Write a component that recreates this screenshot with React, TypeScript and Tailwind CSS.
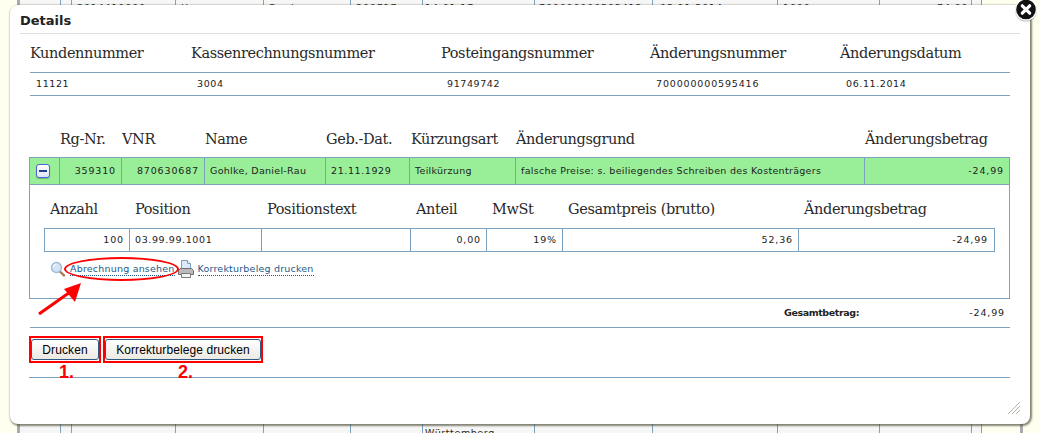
import React from 'react';

const bgLines = [60, 71, 175, 263, 350, 422, 534, 652, 777, 879, 971, 981];
const heading = "font-['DejaVu_Serif',serif] text-[14.5px] leading-[18px] font-light text-[#2a2a2a] tracking-[-0.39px]";
const base = "font-['DejaVu_Sans',sans-serif] text-[9.5px] leading-[12px] text-[#222]";
const small = `${base} tracking-[0.3px]`;
const nummer = `${base} tracking-[0.85px]`;
const datum = `${base} tracking-[0.6px]`;
const line = 'border-[#7ba2c1]';

// Zeile der Tabelle hinter dem Dialog, nur die Oberkante schaut heraus
const bgRow: [number, string][] = [
  [77, '3014410000'],
  [181, 'Hansen'],
  [268, 'Gerda'],
  [356, '390717'],
  [425, '14.01.17'],
  [539, '700000000595412'],
  [660, '05.11.2014'],
  [783, '1000'],
  [937, '74,99'],
];

const kopf = [
  ['Kundennummer', '11121', datum],
  ['Kassenrechnungsnummer', '3004', datum],
  ['Posteingangsnummer', '91749742', datum],
  ['Änderungsnummer', '700000000595416', nummer],
  ['Änderungsdatum', '06.11.2014', datum],
];

const rowCells = [
  { t: '359310', right: true, c: nummer },
  { t: '870630687', right: true, c: nummer },
  { t: 'Gohlke, Daniel-Rau', c: small },
  { t: '21.11.1929', c: datum },
  { t: 'Teilkürzung', c: small },
  { t: 'falsche Preise: s. beiliegendes Schreiben des Kostenträgers', c: small },
  { t: '-24,99', right: true, c: nummer },
];

const posCells = [
  { t: '100', right: true, c: nummer },
  { t: '03.99.99.1001', c: datum },
  { t: '', c: small },
  { t: '0,00', right: true, c: nummer },
  { t: '19%', right: true, c: nummer },
  { t: '52,36', right: true, c: nummer },
  { t: '-24,99', right: true, c: nummer },
];

function Magnifier() {
  return (
    <svg width="16" height="16" viewBox="0 0 16 16" className="shrink-0">
      <path d="M10 10.5l4 4" stroke="#a9784f" strokeWidth="2.4" strokeLinecap="round" />
      <circle cx="6.5" cy="6.5" r="5" fill="#d5e4f6" stroke="#9db8d8" strokeWidth="1.3" />
      <path d="M3.5 6a3 3 0 0 1 3-3" stroke="#fff" strokeWidth="1.2" fill="none" />
    </svg>
  );
}

function Printer() {
  return (
    <svg width="16" height="18" viewBox="0 0 16 18" className="shrink-0">
      <path d="M3.5 .5h6l3 3v6h-9z" fill="#dce9f8" stroke="#7d9cc4" />
      <path d="M9.5 .5v3h3" fill="#fff" stroke="#7d9cc4" />
      <path d="M.5 10.5l2-2h11l2 2v4h-15z" fill="#b9b9b9" stroke="#6e6e6e" />
      <path d="M3.5 13.5h9v4h-9z" fill="#f4f4f4" stroke="#7a7a7a" />
    </svg>
  );
}

function CloseIcon() {
  return (
    <svg width="24" height="24" viewBox="0 0 24 24">
      <circle cx="12" cy="12.6" r="11" fill="#777" opacity="0.45" />
      <circle cx="12" cy="11.5" r="10.4" fill="#111" stroke="#fff" strokeWidth="1.2" />
      <path d="M8.3 7.8l7.4 7.4M15.7 7.8l-7.4 7.4" stroke="#fff" strokeWidth="3.2" strokeLinecap="round" />
    </svg>
  );
}

function Resize() {
  return (
    <svg width="12" height="12" viewBox="0 0 12 12">
      <path d="M0 12L12 0M4 12l8-8M8 12l4-4" stroke="#b5b2a4" strokeWidth="1" />
    </svg>
  );
}

function Button({ label, w }: { label: string; w: string }) {
  return (
    <div className="flex items-center border-2 border-[#f00] h-[27px]">
      <button className={`${w} h-[21px] rounded-[3px] border border-[#2d5a85] bg-gradient-to-b from-white to-[#ece9e2] font-['Liberation_Sans',sans-serif] text-[12px] tracking-[0.1px] leading-[16px] text-black`}>
        {label}
      </button>
    </div>
  );
}

export default function App() {
  return (
    <div className="relative w-[1040px] h-[433px] overflow-hidden bg-[#fffff0]">
      {/* Seite hinter dem Dialog */}
      <div className="absolute left-[17px] top-0 w-[1006px] h-[433px] bg-[#f6f6f6] border-x-[3px] border-[#a9a9b0]" />
      {bgLines.map((x) => (
        <div key={x} className="absolute top-0 h-[433px] w-px bg-[#7ba2c1]" style={{ left: x }} />
      ))}
      <div className="absolute left-[982px] top-0 h-[433px] w-[38px] bg-[#fffff0]" />
      {bgRow.map(([x, t]) => (
        <div key={x} className={`absolute top-[2px] ${nummer}`} style={{ left: x }}>{t}</div>
      ))}
      <div className={`absolute left-[425px] top-[427px] ${datum}`}>Württemberg</div>

      {/* Dialog */}
      <div className="absolute left-[10px] top-[5px] w-[1020px] h-[419px] rounded-lg bg-white shadow-[1px_1px_2px_1px_rgba(80,80,60,0.7)] px-[10px]">
        <div className="h-[29px] border-b border-[#e0e0e0] pt-[8px] font-['DejaVu_Sans',sans-serif] font-bold text-[13px] leading-[15px] text-[#222]">Details</div>

        <div className="mx-[10px]">
          {/* Kopfdaten */}
          <div className="grid grid-cols-[161px_250px_209px_190px_170px] pt-[10px] h-[38px]">
            {kopf.map(([h]) => (
              <div key={h} className={heading}>{h}</div>
            ))}
          </div>
          <div className={`grid grid-cols-[161px_250px_209px_190px_170px] h-[24px] border-y ${line} items-center`}>
            {kopf.map(([h, v, c]) => (
              <div key={h} className={`${c} pl-[6px]`}>{v}</div>
            ))}
          </div>

          {/* Rechnungen */}
          <div className="grid grid-cols-[31px_62px_83px_121px_85px_105px_349px_145px] mt-[33px] pt-[1px] h-[28px] -ml-px">
            <div />
            {['Rg-Nr.', 'VNR', 'Name', 'Geb.-Dat.', 'Kürzungsart', 'Änderungsgrund', 'Änderungsbetrag'].map((h) => (
              <div key={h} className={heading}>{h}</div>
            ))}
          </div>
          <div className={`grid grid-cols-[29px_62px_83px_121px_84px_106px_349px_145px] h-[28px] -ml-px bg-[#98ef98] border ${line} items-center`}>
            <div className="pl-[6px]">
              <div className="w-[14px] h-[14px] rounded-[3px] bg-gradient-to-b from-white to-[#dfe6fa] border border-[#4a63d8] flex items-center justify-center shadow-[0_1px_1px_rgba(0,0,0,0.25)]">
                <div className="w-[8px] h-[2px] bg-[#23408f]" />
              </div>
            </div>
            {rowCells.map((c) => (
              <div key={c.t} className={`${c.c} h-full border-l ${line} flex items-center px-[5px] ${c.right ? 'justify-end' : ''}`}>{c.t}</div>
            ))}
          </div>

          {/* Positionen */}
          <div className={`relative -ml-px h-[114px] border-x border-b ${line} px-[14px]`}>
            <div className="grid grid-cols-[85px_132px_149px_76px_76px_236px_195px] pt-[15px] h-[43px]">
              {['Anzahl', 'Position', 'Positionstext', 'Anteil', 'MwSt', 'Gesamtpreis (brutto)', 'Änderungsbetrag'].map((h) => (
                <div key={h} className={`${heading} pl-[6px]`}>{h}</div>
              ))}
            </div>
            <div className={`grid grid-cols-[85px_132px_149px_76px_76px_236px_195px] h-[24px] border-y border-r ${line}`}>
              {posCells.map((c, i) => (
                <div key={i} className={`${c.c} border-l ${line} flex items-center px-[5px] ${c.right ? 'justify-end' : ''}`}>{c.t}</div>
              ))}
            </div>
            <div className="flex items-center h-[20px] mt-[7px] pl-[6px]">
              <Magnifier />
              <a className={`${base} tracking-[0.2px] ml-[4px] !text-[#1a5a8a] border-b border-dotted border-[#1a5a8a]`}>Abrechnung ansehen</a>
              <div className="ml-[3px]"><Printer /></div>
              <a className={`${base} tracking-[0.2px] ml-[4px] !text-[#1a5a8a] border-b border-dotted border-[#1a5a8a]`}>Korrekturbeleg drucken</a>
            </div>
          </div>

          {/* Summe */}
          <div className={`flex h-[29px] items-center justify-end border-b ${line}`}>
            <div className={`${base} font-bold w-[150px] tracking-[-0.4px]`}>Gesamtbetrag:</div>
            <div className={`${nummer} w-[76px] text-right pr-[5px]`}>-24,99</div>
          </div>

          <div className={`flex gap-[2px] -ml-px pt-[8px] h-[50px] border-b ${line}`}>
            <Button label="Drucken" w="w-[68px]" />
            <Button label="Korrekturbelege drucken" w="w-[156px]" />
          </div>
        </div>

        <div className="absolute right-[10px] bottom-[10px] flex"><Resize /></div>
      </div>

      {/* Anmerkungen im Screenshot */}
      <div className="absolute left-[64px] top-[257px] w-[115px] h-[24px] rounded-[50%] border-[2.5px] border-[#f00]" />
      <svg className="absolute left-[35px] top-[280px]" width="55" height="40" viewBox="0 0 55 40">
        <path d="M4 34L38 10" stroke="#f00" strokeWidth="3" />
        <path d="M46 3L29 9l11 13z" fill="#f00" />
      </svg>
      <div className="absolute left-[59px] top-[362px] font-['Liberation_Sans',sans-serif] font-bold text-[18px] leading-[20px] text-[#f00]">1.</div>
      <div className="absolute left-[178px] top-[362px] font-['Liberation_Sans',sans-serif] font-bold text-[18px] leading-[20px] text-[#f00]">2.</div>
      <div className="absolute left-[1014px] top-[-2px]"><CloseIcon /></div>
    </div>
  );
}
